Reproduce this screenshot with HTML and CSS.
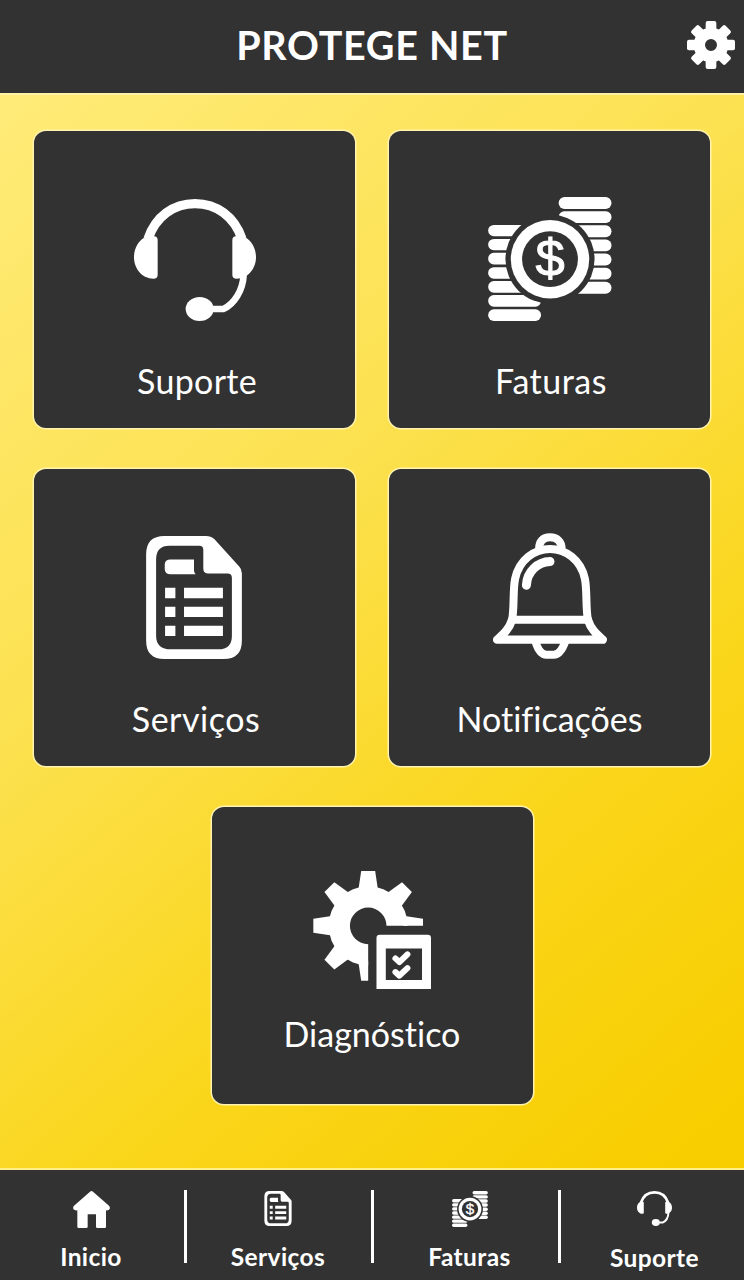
FILE: index.html
```html
<!DOCTYPE html>
<html lang="pt-BR">
<head>
  <meta charset="UTF-8">
  <meta name="viewport" content="width=device-width, initial-scale=1.0">
  <title>PROTEGE NET</title>
  <link rel="stylesheet" href="styles.css">
</head>
<body>
  <!-- Ícones -->
  <svg class="sprite" aria-hidden="true">
    <symbol id="icon-suporte" viewBox="0 0 366 366">
      <path d="M42 120C65 52 119 14 183 14S301 52 324 120" fill="none" stroke="currentColor" stroke-width="28"/>
      <path d="M30 116Q34 112 60 112Q71 112 71 124V228Q71 239 58 239C25 239 0 210 0 175C0 148 12 128 30 116Z"/>
      <path d="M336 116Q332 112 306 112Q295 112 295 124V228Q295 239 308 239C341 239 366 210 366 175C366 148 354 128 336 116Z"/>
      <path d="M329 226C327 275 300 316 268 330H235" fill="none" stroke="currentColor" stroke-width="20"/>
      <ellipse cx="197" cy="330" rx="42" ry="36"/>
    </symbol>

    <symbol id="icon-faturas" viewBox="0 0 372 373">
      <g>
        <rect x="212" y="0" width="159" height="36" rx="18"/>
        <rect x="212" y="43" width="159" height="35" rx="17"/>
        <rect x="212" y="85" width="159" height="36" rx="18"/>
        <rect x="212" y="128" width="159" height="35" rx="17"/>
        <rect x="212" y="170" width="159" height="36" rx="18"/>
        <rect x="212" y="213" width="159" height="35" rx="17"/>
        <rect x="212" y="255" width="159" height="36" rx="18"/>
        <rect x="0" y="84" width="159" height="34" rx="17"/>
        <rect x="0" y="126" width="159" height="34" rx="17"/>
        <rect x="0" y="168" width="159" height="35" rx="17"/>
        <rect x="0" y="211" width="159" height="35" rx="17"/>
        <rect x="0" y="253" width="159" height="35" rx="17"/>
        <rect x="0" y="295" width="159" height="35" rx="17"/>
        <rect x="0" y="338" width="159" height="35" rx="17"/>
      </g>
      <circle class="dark" cx="186" cy="187" r="134"/>
      <circle cx="186" cy="187" r="118"/>
      <circle class="dark" cx="186" cy="187" r="84"/>
      <text class="dollar" x="186" y="239" text-anchor="middle">$</text>
    </symbol>

    <symbol id="icon-servicos" viewBox="0 0 288 370">
      <path fill-rule="evenodd" d="M55 0H180Q195 0 205 9L280 92Q288 100 288 112V315Q288 370 233 370H55Q0 370 0 315V55Q0 0 55 0ZM70 29Q30 29 30 70V300Q30 341 75 341H217Q258 341 258 300V126Q258 113 245 113H187Q172 113 172 98V41Q172 29 160 29Z"/>
      <path d="M74 71H144V104Q144 110 149 115H74Q56 115 56 100V86Q56 71 74 71Z"/>
      <path d="M57 156h31v31h-31zM114 156h117v31h-117zM57 213h31v31h-31zM114 213h117v31h-117zM57 270h31v31h-31zM114 270h117v31h-117z"/>
    </symbol>

    <symbol id="icon-notificacoes" viewBox="0 0 342 379">
      <g fill="none" stroke="currentColor" stroke-width="24" stroke-linecap="round" stroke-linejoin="round">
        <path d="M57 261C64 225 59 172 66 138C78 80 125 48 171 48C217 48 264 80 276 138C283 172 278 225 285 261"/>
        <path d="M58 261H284"/>
        <path d="M57 261C48 290 30 305 12 321H330C312 305 294 290 285 261" stroke-width="25"/>
        <path d="M127 326Q139 366 160 366H182Q203 366 217 326"/>
        <path d="M138 48C138 25 150 13 171 13C192 13 206 25 206 48"/>
        <path d="M100 157C102 115 135 87 171 86" stroke-width="27"/>
      </g>
    </symbol>

    <symbol id="icon-diagnostico" viewBox="0 0 355 355">
      <clipPath id="corte"><path d="M0 0H355V165H166V355H0Z"/></clipPath>
      <g clip-path="url(#corte)">
        <circle cx="166" cy="165" r="119"/>
        <path id="dente" d="M145 0H187L196 60H136Z"/>
        <use href="#dente" transform="rotate(45 166 165)"/>
        <use href="#dente" transform="rotate(90 166 165)"/>
        <use href="#dente" transform="rotate(180 166 165)"/>
        <use href="#dente" transform="rotate(225 166 165)"/>
        <use href="#dente" transform="rotate(270 166 165)"/>
        <use href="#dente" transform="rotate(315 166 165)"/>
      </g>
      <circle class="dark" cx="166" cy="165" r="55"/>
      <path fill-rule="evenodd" d="M201 192H345Q355 192 355 202V355H191V202Q191 192 201 192ZM219 233V328H328V233Z"/>
      <path d="M248 263L260 274L284 251M248 304L260 315L284 292" fill="none" stroke="currentColor" stroke-width="18" stroke-linecap="round" stroke-linejoin="round"/>
    </symbol>

    <symbol id="icon-config" viewBox="0 0 144 144">
      <path fill-rule="evenodd" d="M72 20A52 52 0 1 0 72 124A52 52 0 1 0 72 20ZM72 54A18 18 0 1 1 72 90A18 18 0 1 1 72 54Z"/>
      <rect id="barra" x="56" y="0" width="32" height="38" rx="6"/>
      <use href="#barra" transform="rotate(45 72 72)"/>
      <use href="#barra" transform="rotate(90 72 72)"/>
      <use href="#barra" transform="rotate(135 72 72)"/>
      <use href="#barra" transform="rotate(180 72 72)"/>
      <use href="#barra" transform="rotate(225 72 72)"/>
      <use href="#barra" transform="rotate(270 72 72)"/>
      <use href="#barra" transform="rotate(315 72 72)"/>
    </symbol>

    <symbol id="icon-inicio" viewBox="0 0 111 111">
      <path d="M51 2Q55.500 -2 60 2L108 44Q112 49 110 54Q107 59 99 58V107Q99 111 95 111H73Q69 111 69 107V70H44V107Q44 111 40 111H17Q13 111 13 107V58Q4 59 1 54Q-1 49 3 44Z"/>
    </symbol>
  </svg>

  <header class="header">
    <h1 class="title">PROTEGE NET</h1>
    <a class="config" href="#" aria-label="Configurações"><svg><use href="#icon-config"/></svg></a>
  </header>

  <main class="menu">
    <a class="card card-suporte" href="#">
      <span class="card-icon"><svg width="122" height="122"><use href="#icon-suporte"/></svg></span>
      <span class="card-label">Suporte</span>
    </a>
    <a class="card card-faturas" href="#">
      <span class="card-icon"><svg width="124" height="124"><use href="#icon-faturas"/></svg></span>
      <span class="card-label">Faturas</span>
    </a>
    <a class="card card-servicos" href="#">
      <span class="card-icon"><svg width="96" height="123"><use href="#icon-servicos"/></svg></span>
      <span class="card-label">Serviços</span>
    </a>
    <a class="card card-notificacoes" href="#">
      <span class="card-icon"><svg width="114" height="126"><use href="#icon-notificacoes"/></svg></span>
      <span class="card-label">Notificações</span>
    </a>
    <a class="card card-diagnostico" href="#">
      <span class="card-icon"><svg width="118" height="118"><use href="#icon-diagnostico"/></svg></span>
      <span class="card-label">Diagnóstico</span>
    </a>
  </main>

  <nav class="navbar">
    <a class="nav-item nav-inicio" href="#">
      <svg width="37" height="37"><use href="#icon-inicio"/></svg>
      <span>Inicio</span>
    </a>
    <a class="nav-item nav-servicos" href="#">
      <svg width="28" height="35"><use href="#icon-servicos"/></svg>
      <span>Serviços</span>
    </a>
    <a class="nav-item nav-faturas" href="#">
      <svg width="36" height="36"><use href="#icon-faturas"/></svg>
      <span>Faturas</span>
    </a>
    <a class="nav-item nav-suporte" href="#">
      <svg width="35" height="35"><use href="#icon-suporte"/></svg>
      <span>Suporte</span>
    </a>
  </nav>
</body>
</html>
```
FILE: styles.css
```css
* {
  box-sizing: border-box;
}

body {
  margin: 0;
  height: 1280px;
  display: flex;
  flex-direction: column;
  overflow: hidden;
  background: #323232;
  color: #fff;
  font-family: Lato, "Liberation Sans", sans-serif;
  font-variant-ligatures: none;
}

a {
  color: inherit;
  text-decoration: none;
}

svg {
  display: block;
  fill: currentColor;
}

.sprite {
  position: absolute;
  width: 0;
  height: 0;
}

.dark {
  fill: #323232;
}

.dollar {
  font-family: "Liberation Sans", Arial, sans-serif;
  font-size: 158px;
  font-weight: 400;
  letter-spacing: 0;
  stroke: currentColor;
  stroke-width: 3px;
}

/* Cabeçalho */
.header {
  height: 93px;
  flex-shrink: 0;
  display: flex;
  align-items: center;
  padding: 0 9px 3px 57px;
}

.title {
  flex: 1;
  margin: 0;
  text-align: center;
  font-size: 39.5px;
  font-weight: 700;
  line-height: 48px;
  letter-spacing: 0.7px;
  padding-bottom: 1px;
}

.config svg {
  width: 48px;
  height: 48px;
}

/* Menu principal */
.menu {
  flex: 1;
  display: flex;
  flex-wrap: wrap;
  justify-content: center;
  align-content: flex-start;
  gap: 41px 34px;
  padding: 36px 34px 0;
  border-top: 2px solid #fff1a6;
  border-bottom: 2px solid #ffee8a;
  background: linear-gradient(140deg, #ffeb78 0%, #fce150 38%, #fad61c 68%, #f8ce00 96%);
}

.card {
  width: 321px;
  height: 297px;
  display: flex;
  flex-direction: column;
  align-items: center;
  padding-top: 66px;
  border-radius: 12px;
  background: #323232;
  box-shadow: 0 0 0 1.5px #fff3ae;
}

.card-icon {
  height: 124px;
  display: flex;
  align-items: flex-end;
}

.card-label {
  margin-top: 40px;
  font-size: 34px;
  line-height: 40px;
}

.card-suporte .card-label {
  padding-left: 5px;
  letter-spacing: 0.3px;
}

.card-faturas .card-label,
.card-servicos .card-label {
  padding-left: 3px;
  letter-spacing: 0.5px;
}

.card-servicos .card-icon {
  padding-right: 1px;
}

.card-diagnostico {
  padding-top: 58px;
}

.card-diagnostico .card-label {
  margin-top: 25px;
}

/* Barra inferior */
.navbar {
  height: 110px;
  flex-shrink: 0;
  display: flex;
  padding-top: 20px;
}

.nav-item {
  width: 187px;
  height: 73px;
  display: flex;
  flex-direction: column;
  align-items: center;
  justify-content: space-between;
  padding-top: 1px;
  border-right: 3px solid #fff;
  font-size: 24.500px;
  font-weight: 700;
  letter-spacing: 0.4px;
}

.nav-item span {
  line-height: 28px;
  margin-bottom: -8px;
}

.nav-inicio {
  padding-right: 2px;
}

.nav-servicos {
  padding-right: 2px;
}

.nav-faturas {
  padding-left: 7px;
}

.nav-suporte {
  width: 183px;
  padding-left: 4px;
  border-right: 0;
}

.nav-suporte span {
  margin-bottom: -9px;
}
```
